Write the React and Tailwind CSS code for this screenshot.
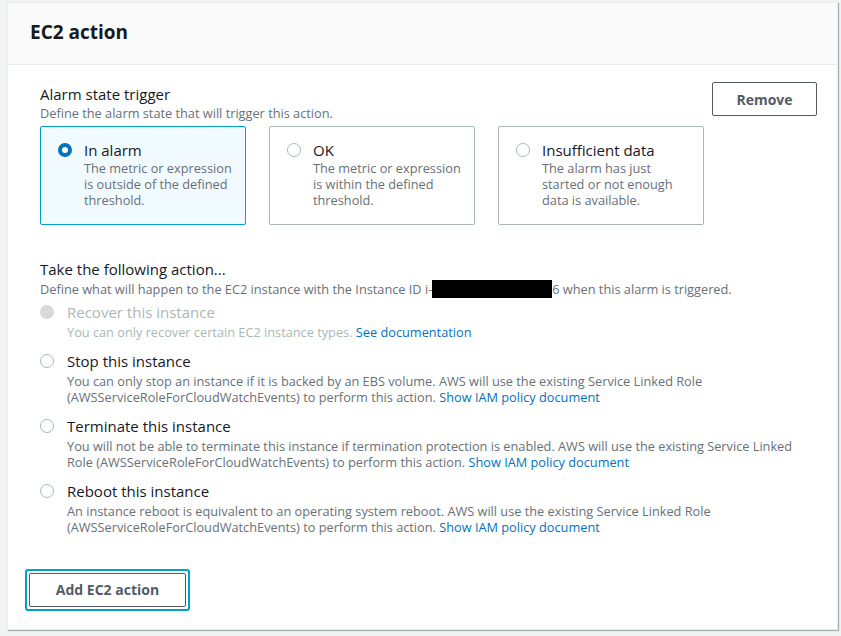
import { useState } from "react";

const triggers = [
  { id: "alarm", label: "In alarm", desc: "The metric or expression is outside of the defined threshold." },
  { id: "ok", label: "OK", desc: "The metric or expression is within the defined threshold." },
  { id: "insufficient", label: "Insufficient data", desc: "The alarm has just started or not enough data is available." },
];

const actions = [
  {
    id: "recover",
    label: "Recover this instance",
    disabled: true,
    desc: "You can only recover certain EC2 instance types. ",
    link: "See documentation",
  },
  {
    id: "stop",
    label: "Stop this instance",
    desc: "You can only stop an instance if it is backed by an EBS volume. AWS will use the existing Service Linked Role (AWSServiceRoleForCloudWatchEvents) to perform this action. ",
    link: "Show IAM policy document",
  },
  {
    id: "terminate",
    label: "Terminate this instance",
    desc: "You will not be able to terminate this instance if termination protection is enabled. AWS will use the existing Service Linked Role (AWSServiceRoleForCloudWatchEvents) to perform this action. ",
    link: "Show IAM policy document",
  },
  {
    id: "reboot",
    label: "Reboot this instance",
    desc: "An instance reboot is equivalent to an operating system reboot. AWS will use the existing Service Linked Role (AWSServiceRoleForCloudWatchEvents) to perform this action. ",
    link: "Show IAM policy document",
  },
];

function Radio({ checked, disabled }) {
  if (disabled) return <span className="block w-[14px] h-[14px] rounded-full bg-[#d5dbdb] shrink-0" />;
  if (checked) return <span className="block w-[14px] h-[14px] rounded-full border-[4px] border-[#0073bb] bg-white shrink-0" />;
  return <span className="block w-[14px] h-[14px] rounded-full border border-[#aab7b8] bg-white shrink-0" />;
}

export default function App() {
  const [trigger, setTrigger] = useState("alarm");
  const [action, setAction] = useState(null);

  return (
    <div className="min-h-screen bg-[#f2f3f3] pt-[2px] pl-[7px] pr-[3px] pb-[6px] text-[#16191f]" style={{ fontFamily: '"Open Sans", sans-serif' }}>
      <div className="bg-white border border-[#eaeded] shadow-[1px_1px_1px_0_rgba(0,28,36,0.3)]">
        <div className="bg-[#fafafa] border-b border-[#eaeded] h-[62px] flex items-center px-[22px] pb-[3px]">
          <h2 className="text-[19px] font-bold leading-none">EC2 action</h2>
        </div>

        <div className="pl-[32px] pr-[20px] pt-[19px] pb-[18px]">
          <div className="flex justify-between">
            <div>
              <div className="text-[15px] leading-[20px]">Alarm state trigger</div>
              <div className="text-[12.75px] leading-[18px] text-[#687078]">Define the alarm state that will trigger this action.</div>

              <div className="flex gap-[23px] mt-[4px]">
                {triggers.map((t) => {
                  const on = trigger === t.id;
                  return (
                    <div
                      key={t.id}
                      onClick={() => setTrigger(t.id)}
                      className={`w-[206px] h-[99px] rounded-[2px] border pl-[17px] pr-[12px] pt-[13px] flex gap-[12px] cursor-pointer ${on ? "border-[#00a1c9] bg-[#f1faff]" : "border-[#aab7b8] bg-white"}`}
                    >
                      <div className="pt-[3px]"><Radio checked={on} /></div>
                      <div>
                        <div className="text-[15px] leading-[20px]">{t.label}</div>
                        <div className="text-[12.75px] leading-[16px] text-[#687078]">{t.desc}</div>
                      </div>
                    </div>
                  );
                })}
              </div>
            </div>
            <button className="mt-[-2px] h-[34px] w-[105px] border border-[#545b64] rounded-[2px] text-[14px] font-bold text-[#545b64]">
              Remove
            </button>
          </div>

          <div className="mt-[34px]">
            <div className="text-[15px] leading-[20px]">Take the following action...</div>
            <div className="text-[12.75px] leading-[20px] text-[#687078] flex items-center">
              Define what will happen to the EC2 instance with the Instance ID i-
              <span className="inline-block w-[120px] h-[18px] bg-black" />
              6 when this alarm is triggered.
            </div>
          </div>

          <div className="mt-[3px] flex flex-col gap-[11px] max-w-[770px]">
            {actions.map((a) => (
              <div key={a.id} className="flex gap-[13px]" onClick={() => !a.disabled && setAction(a.id)}>
                <div className="pt-[3px]"><Radio checked={action === a.id} disabled={a.disabled} /></div>
                <div>
                  <div className={`text-[15px] leading-[20px] ${a.disabled ? "text-[#aab7b8]" : ""}`}>{a.label}</div>
                  <p className={`mt-[2px] text-[12.75px] leading-[16px] ${a.disabled ? "text-[#aab7b8]" : "text-[#687078]"}`}>
                    {a.desc}
                    <a className="text-[#0073bb]">{a.link}</a>
                  </p>
                </div>
              </div>
            ))}
          </div>

          <div className="mt-[34px] ml-[-15px]">
            <button className="border-2 border-[#00a1c9] rounded-[3px] p-[2px]">
              <span className="block w-[157px] h-[34px] border border-[#545b64] rounded-[2px] text-[14px] font-bold text-[#545b64] leading-[32px]">
                Add EC2 action
              </span>
            </button>
          </div>
        </div>
      </div>
    </div>
  );
}
